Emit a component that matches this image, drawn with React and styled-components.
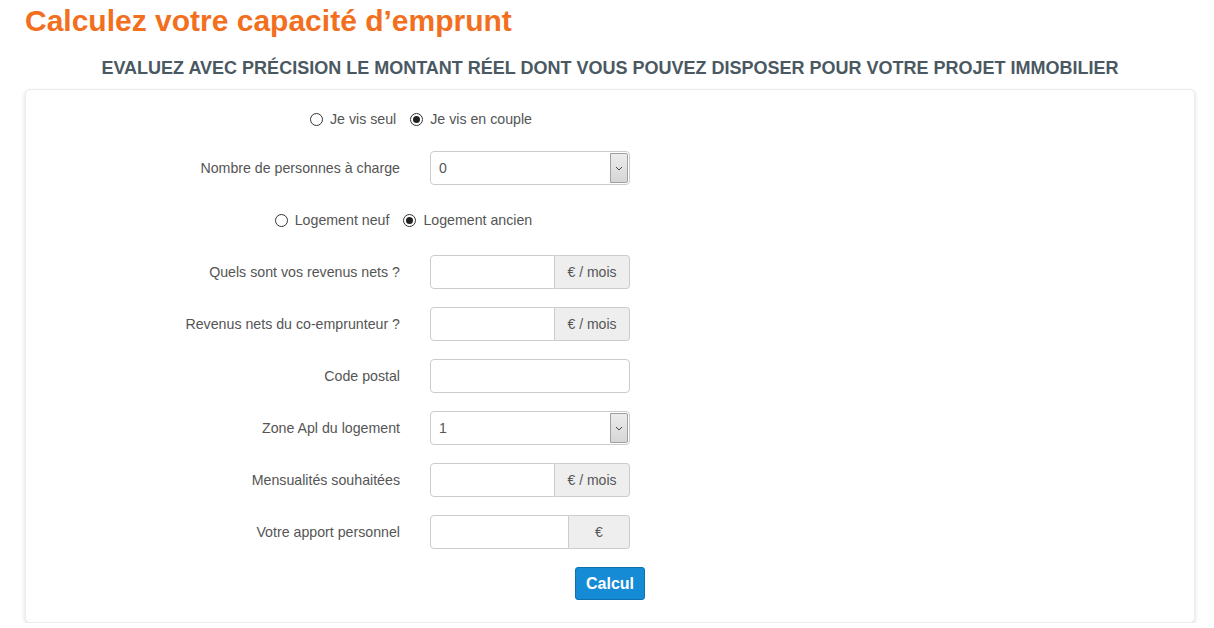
import React, { useState } from "react";
import styled, { createGlobalStyle } from "styled-components";

const GlobalStyle = createGlobalStyle`
  body {
    margin: 0;
    background: #fff;
    font-family: "Liberation Sans", Arial, sans-serif;
    color: #555;
  }
`;

const Page = styled.div`
  padding: 0 19px 0 25px;
`;

const Title = styled.h1`
  margin: 0;
  padding-top: 4px;
  font-size: 30px;
  line-height: 34px;
  font-weight: bold;
  color: #f26f1d;
`;

const SubTitle = styled.h2`
  margin: 19px 0 10px;
  text-align: center;
  font-size: 18px;
  line-height: 22px;
  font-weight: bold;
  color: #4a5961;
  text-transform: uppercase;
`;

const Card = styled.div`
  box-sizing: border-box;
  background: #fff;
  border: 1px solid #ececec;
  border-radius: 5px;
  box-shadow: 0 2px 4px rgba(0, 0, 0, 0.14);
  padding: 15px 0 0 114px;
  height: 534px;
`;

const Form = styled.form`
  width: 490px;
  display: flex;
  flex-direction: column;
  gap: 18px;
`;

const RadioRow = styled.div`
  height: ${(p) => p.h}px;
  display: flex;
  justify-content: center;
  align-items: center;
  gap: 14px;
  margin-left: ${(p) => p.shift || 0}px;
  font-size: 14.2px;
  color: #555;
`;

const RadioLabel = styled.label`
  display: flex;
  align-items: center;
  gap: 7px;
  cursor: pointer;
`;

const RadioDot = styled.span`
  width: 11px;
  height: 11px;
  border-radius: 50%;
  border: 1px solid #333;
  display: inline-flex;
  align-items: center;
  justify-content: center;
  &::after {
    content: "";
    width: 7px;
    height: 7px;
    border-radius: 50%;
    background: ${(p) => (p.checked ? "#222" : "transparent")};
  }
`;

const Row = styled.div`
  display: grid;
  grid-template-columns: 260px 200px;
  column-gap: 30px;
  align-items: center;
  height: 34px;
`;

const Label = styled.label`
  text-align: right;
  white-space: nowrap;
  font-size: 14.2px;
  color: #555;
`;

const Group = styled.div`
  display: flex;
  width: 200px;
  height: 34px;
`;

const Input = styled.input`
  box-sizing: border-box;
  flex: 1;
  min-width: 0;
  height: 34px;
  border: 1px solid #ccc;
  border-radius: ${(p) => (p.joined ? "4px 0 0 4px" : "4px")};
  padding: 6px 12px;
  font-family: inherit;
  font-size: 14px;
  color: #555;
  outline: none;
`;

const Addon = styled.span`
  box-sizing: border-box;
  width: ${(p) => p.w}px;
  height: 34px;
  display: flex;
  align-items: center;
  justify-content: center;
  background: #eee;
  border: 1px solid #ccc;
  border-left: none;
  border-radius: 0 4px 4px 0;
  font-size: 14px;
  color: #555;
`;

const SelectBox = styled.div`
  box-sizing: border-box;
  width: 200px;
  height: 34px;
  display: flex;
  border: 1px solid #ccc;
  border-radius: 4px;
  overflow: hidden;
`;

const SelectValue = styled.span`
  flex: 1;
  display: flex;
  align-items: center;
  padding-left: 8px;
  font-size: 14px;
  color: #555;
`;

const SelectArrow = styled.span`
  width: 16px;
  margin: 1px 1px 1px 0;
  display: flex;
  align-items: center;
  justify-content: center;
  background: linear-gradient(#ececec, #d6d6d6);
  border: 1px solid #a0a0a0;
  border-radius: 0 2px 2px 0;
  color: #444;
`;

const ButtonRow = styled.div`
  display: flex;
  justify-content: flex-end;
  margin-right: -15px;
`;

const Button = styled.button`
  width: 70px;
  height: 33px;
  background: #158bd6;
  border: 1px solid #0f70b0;
  border-radius: 3px;
  color: #fff;
  font-family: inherit;
  font-size: 16px;
  font-weight: bold;
  cursor: pointer;
`;

function Radio({ checked, onChange, children }) {
  return (
    <RadioLabel onClick={onChange}>
      <RadioDot checked={checked} />
      {children}
    </RadioLabel>
  );
}

function Select({ value }) {
  return (
    <SelectBox>
      <SelectValue>{value}</SelectValue>
      <SelectArrow>
        <svg width="8" height="5" viewBox="0 0 8 5">
          <path d="M1 1 L4 4 L7 1" fill="none" stroke="#444" strokeWidth="1" />
        </svg>
      </SelectArrow>
    </SelectBox>
  );
}

export default function App() {
  const [couple, setCouple] = useState(true);
  const [ancien, setAncien] = useState(true);

  const field = (label, unit, w) => (
    <Row key={label}>
      <Label>{label}</Label>
      <Group>
        <Input joined={!!unit} />
        {unit && <Addon w={w}>{unit}</Addon>}
      </Group>
    </Row>
  );

  return (
    <>
      <GlobalStyle />
      <Page>
        <Title>Calculez votre capacité d’emprunt</Title>
        <SubTitle>
          Evaluez avec précision le montant réel dont vous pouvez disposer pour
          votre projet immobilier
        </SubTitle>
        <Card>
          <Form onSubmit={(e) => e.preventDefault()}>
            <RadioRow h={28} shift={72}>
              <Radio checked={!couple} onChange={() => setCouple(false)}>
                Je vis seul
              </Radio>
              <Radio checked={couple} onChange={() => setCouple(true)}>
                Je vis en couple
              </Radio>
            </RadioRow>
            <Row>
              <Label>Nombre de personnes à charge</Label>
              <Select value="0" />
            </Row>
            <RadioRow h={34} shift={37}>
              <Radio checked={!ancien} onChange={() => setAncien(false)}>
                Logement neuf
              </Radio>
              <Radio checked={ancien} onChange={() => setAncien(true)}>
                Logement ancien
              </Radio>
            </RadioRow>
            {field("Quels sont vos revenus nets ?", "€ / mois", 75)}
            {field("Revenus nets du co-emprunteur ?", "€ / mois", 75)}
            {field("Code postal")}
            <Row>
              <Label>Zone Apl du logement</Label>
              <Select value="1" />
            </Row>
            {field("Mensualités souhaitées", "€ / mois", 75)}
            {field("Votre apport personnel", "€", 61)}
            <ButtonRow>
              <Button type="submit">Calcul</Button>
            </ButtonRow>
          </Form>
        </Card>
      </Page>
    </>
  );
}
